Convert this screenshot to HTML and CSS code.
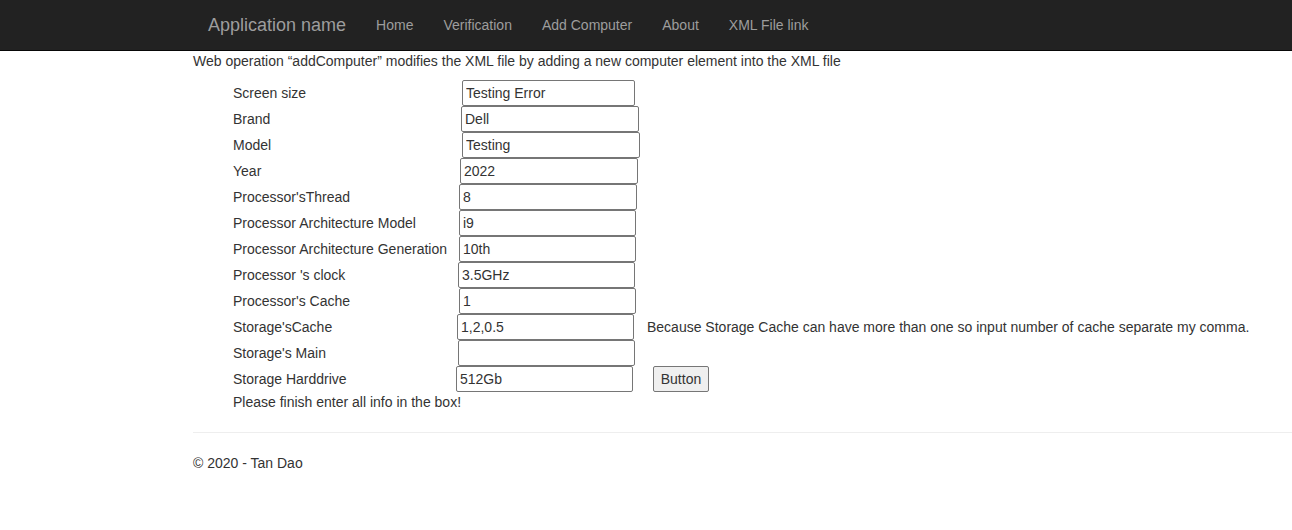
FILE: index.html
```html
<!DOCTYPE html>
<html>
<head>
<meta charset="utf-8">
<title>Add Computer</title>
<link rel="stylesheet" href="styles.css">
</head>
<body>
<nav class="navbar">
  <div class="container nav-inner">
    <a class="brand" href="#">Application name</a>
    <ul class="nav">
      <li><a href="#">Home</a></li>
      <li><a href="#">Verification</a></li>
      <li><a href="#">Add Computer</a></li>
      <li><a href="#">About</a></li>
      <li><a href="#">XML File link</a></li>
    </ul>
  </div>
</nav>
<div class="container body-content">
  <p class="intro">Web operation “addComputer” modifies the XML file by adding a new computer element into the XML file</p>
  <div class="form">
    <label class="lbl">Screen size</label><input class="fld o6 w173" value="Testing Error"><span></span>
    <label class="lbl">Brand</label><input class="fld o5" value="Dell"><span></span>
    <label class="lbl">Model</label><input class="fld o6" value="Testing"><span></span>
    <label class="lbl">Year</label><input class="fld o4" value="2022"><span></span>
    <label class="lbl">Processor'sThread</label><input class="fld o3" value="8"><span></span>
    <label class="lbl">Processor Architecture Model</label><input class="fld o3 w177" value="i9"><span></span>
    <label class="lbl">Processor Architecture Generation</label><input class="fld o3 w177" value="10th"><span></span>
    <label class="lbl">Processor 's clock</label><input class="fld o2 w177" value="3.5GHz"><span></span>
    <label class="lbl">Processor's Cache</label><input class="fld o3 w177" value="1"><span></span>
    <label class="lbl">Storage'sCache</label><input class="fld o1 w177" value="1,2,0.5"><span class="note">Because Storage Cache can have more than one so input number of cache separate my comma.</span>
    <label class="lbl">Storage's Main</label><input class="fld o2 w177" value=""><span></span>
    <label class="lbl">Storage Harddrive</label><input class="fld w177" value="512Gb"><span class="btn-cell"><button class="btn">Button</button></span>
  </div>
  <p class="msg">Please finish enter all info in the box!</p>
  <hr>
  <footer>
    <p>© 2020 - Tan Dao</p>
  </footer>
</div>
</body>
</html>
```

FILE: styles.css
```css
html, body {
  margin: 0;
  padding: 0;
}
body {
  font-family: "Liberation Sans", Arial, Helvetica, sans-serif;
  font-size: 14px;
  line-height: 20px;
  color: #333;
  background: #fff;
}
.container {
  margin-left: 178px;
  padding-left: 15px;
}
.navbar {
  background: #222;
  border-bottom: 1px solid #080808;
  height: 51px;
  box-sizing: border-box;
}
.nav-inner {
  display: flex;
  align-items: center;
  height: 50px;
}
.brand {
  color: #9d9d9d;
  font-size: 18px;
  line-height: 20px;
  padding: 15px;
  text-decoration: none;
}
.nav {
  list-style: none;
  display: flex;
  margin: 0;
  padding: 0;
}
.nav a {
  display: block;
  padding: 15px;
  color: #9d9d9d;
  text-decoration: none;
  line-height: 20px;
}
.intro {
  margin: 0 0 9px;
}
.form {
  display: grid;
  grid-template-columns: 223px 177px auto;
  grid-auto-rows: 26px;
  align-items: center;
  padding-left: 40px;
}
.lbl {
  white-space: nowrap;
}
.fld {
  box-sizing: border-box;
  height: 26px;
  width: 178px;
  margin: 0;
  border: 1px solid #767676;
  border-radius: 2px;
  padding: 0 3px;
  font-family: "Liberation Sans", Arial, sans-serif;
  font-size: 14px;
  color: #333;
  background: #fff;
}
.w173 { width: 173px; }
.w177 { width: 177px; }
.o1 { margin-left: 1px; }
.o2 { margin-left: 2px; }
.o3 { margin-left: 3px; }
.o4 { margin-left: 4px; }
.o5 { margin-left: 5px; }
.o6 { margin-left: 6px; }
.note {
  white-space: nowrap;
  padding-left: 14px;
}
.btn-cell {
  padding-left: 20px;
}
.btn {
  box-sizing: border-box;
  height: 26px;
  width: 56px;
  padding: 0;
  font-family: "Liberation Sans", Arial, sans-serif;
  font-size: 14px;
  color: #333;
  background: #efefef;
  border: 1px solid #767676;
  border-radius: 2px;
  display: block;
}
.msg {
  margin: 0;
  padding-left: 40px;
}
hr {
  margin: 20px 0;
  border: 0;
  border-top: 1px solid #eee;
}
footer p {
  margin: 0 0 10px;
}
```
